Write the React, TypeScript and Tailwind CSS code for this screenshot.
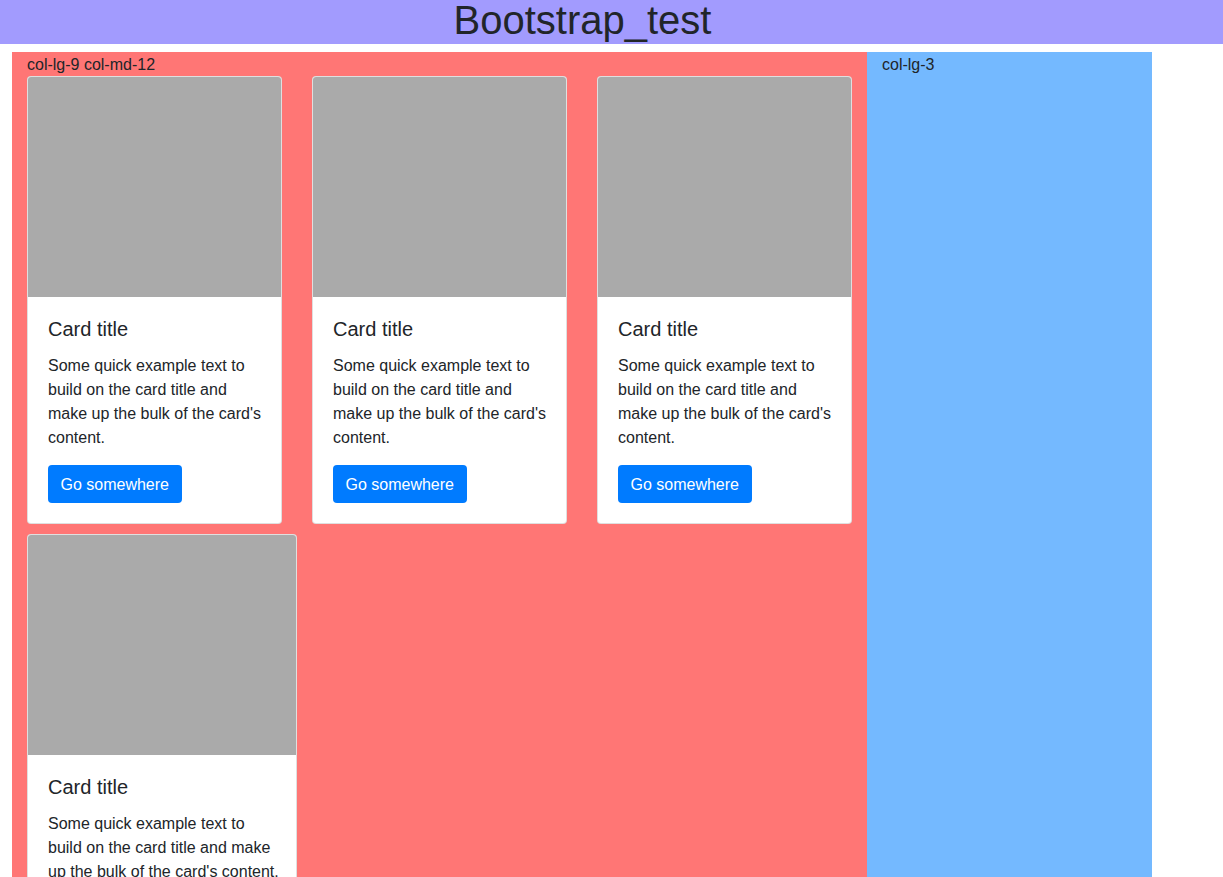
// Bootstrap_test — grid de cards dentro de col-lg-9 + sidebar col-lg-3

const cards = [
  { width: 'w-[255px]', body: 'p-5' },
  { width: 'w-[255px]', body: 'p-5' },
  { width: 'w-[255px]', body: 'p-5' },
  { width: 'w-[270px]', body: 'pl-5 pt-5 pb-5 pr-[16px]' },
];

function Card({ width, body }: { width: string; body: string }) {
  return (
    <div className={`${width} bg-white border border-black/[0.125] rounded flex flex-col`}>
      <div className="h-[220px] bg-[#aaaaaa] rounded-t-[3px]" />
      <div className={body}>
        <h5 className="text-[20px] leading-[24px] mb-3 font-normal">Card title</h5>
        <p className="text-base leading-6 pt-px mb-[15px]">
          Some quick example text to build on the card title and make up the bulk of the card's content.
        </p>
        <button className="bg-[#007bff] text-white text-base leading-6 px-[12.5px] pt-[8px] pb-[6px] rounded">
          Go somewhere
        </button>
      </div>
    </div>
  );
}

export default function App() {
  return (
    <div className="min-h-screen bg-white text-[#212529] font-['Liberation_Sans',Arial,sans-serif]">
      {/* Header */}
      <div className="h-[44px] bg-[#a29bfe] text-center pr-[58px]">
        <h1 className="text-[40px] leading-[40px] font-normal">Bootstrap_test</h1>
      </div>

      {/* Row */}
      <div className="w-[1140px] ml-3 mt-2 flex">
        <div className="w-[855px] bg-[#ff7675] px-[15px]">
          <p className="text-base leading-6 pt-px h-6">col-lg-9 col-md-12</p>
          <div className="flex flex-wrap gap-x-[30px] gap-y-[10px]">
            {cards.map((c, i) => (
              <Card key={i} width={c.width} body={c.body} />
            ))}
          </div>
        </div>
        <div className="w-[285px] bg-[#74b9ff] px-[15px]">
          <p className="text-base leading-6 pt-px">col-lg-3</p>
        </div>
      </div>
    </div>
  );
}
